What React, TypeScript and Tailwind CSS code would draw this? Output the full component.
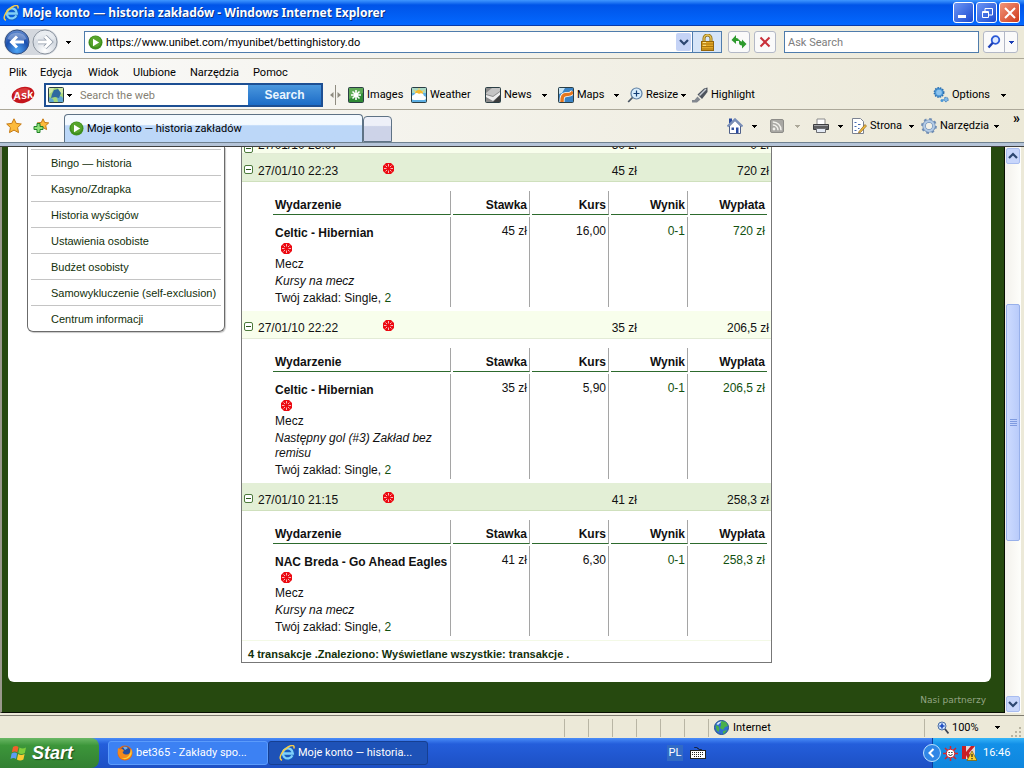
import type { ReactNode } from "react";
import { Fragment } from "react";

type Bet = {
  date: string;
  stake: string;
  payout: string;
  event?: string;
  market?: string;
  odds?: string;
};

const sidebarLinks = [
  "Bingo — historia",
  "Kasyno/Zdrapka",
  "Historia wyścigów",
  "Ustawienia osobiste",
  "Budżet osobisty",
  "Samowykluczenie (self-exclusion)",
  "Centrum informacji",
];

const bets: Bet[] = [
  { date: "27/01/10 23:07", stake: "50 zł", payout: "0 zł" },
  {
    date: "27/01/10 22:23",
    stake: "45 zł",
    payout: "720 zł",
    event: "Celtic - Hibernian",
    market: "Kursy na mecz",
    odds: "16,00",
  },
  {
    date: "27/01/10 22:22",
    stake: "35 zł",
    payout: "206,5 zł",
    event: "Celtic - Hibernian",
    market: "Następny gol (#3) Zakład bez remisu",
    odds: "5,90",
  },
  {
    date: "27/01/10 21:15",
    stake: "41 zł",
    payout: "258,3 zł",
    event: "NAC Breda - Go Ahead Eagles",
    market: "Kursy na mecz",
    odds: "6,30",
  },
];

const menuItems = [
  { label: "Plik", width: "w-[31px]" },
  { label: "Edycja", width: "w-12" },
  { label: "Widok", width: "w-[45px]" },
  { label: "Ulubione", width: "w-[57px]" },
  { label: "Narzędzia", width: "w-[63px]" },
  { label: "Pomoc", width: "w-12" },
];

/* Icons */

function Arrow({ className = "text-black" }: { className?: string }) {
  return (
    <svg className={`h-[3px] w-[5px] shrink-0 ${className}`} viewBox="0 0 5 3" shapeRendering="crispEdges">
      <path d="M0 0h5v1H4v1H3v1H2V2H1V1H0z" fill="currentColor" />
    </svg>
  );
}

function Chevron({ down = false }: { down?: boolean }) {
  return (
    <svg className="h-2.5 w-2.5" viewBox="0 0 10 10">
      <path d={down ? "M1 3l4 4 4-4" : "M1 7l4-4 4 4"} fill="none" stroke="#2c4670" strokeWidth="2.2" />
    </svg>
  );
}

function IeLogo({ size }: { size: string }) {
  return (
    <svg className={`shrink-0 ${size}`} viewBox="0 0 16 16">
      <path
        d="M13.4 10.6A5 5 0 1 1 13.8 8.500H5"
        fill="none"
        stroke="#1560bd"
        strokeWidth="3.800"
      />
      <path
        d="M13.4 10.4A5 5 0 1 1 13.8 8.500H5"
        fill="none"
        stroke="#7fd0fa"
        strokeWidth="2.300"
      />
      <path
        d="M3 15.200C-1.500 14 3 5.500 9 2 13-.3 16 0 14.800 3.600"
        fill="none"
        stroke="#f5cc4a"
        strokeWidth="1.500"
      />
    </svg>
  );
}

function PlayBadge() {
  return (
    <svg className="h-[15px] w-[15px] shrink-0" viewBox="0 0 15 15">
      <circle cx="7.500" cy="7.500" r="7" fill="#3f8f1c" />
      <circle cx="7.500" cy="6.500" r="5.500" fill="#57a42c" />
      <path d="M5 3.800l6.200 3.700L5 11.200z" fill="#fff" />
    </svg>
  );
}

function SportIcon() {
  return (
    <svg className="block h-[11px] w-[11px]" viewBox="0 0 11 11">
      <path d="M3 0h5l3 3v5l-3 3H3L0 8V3z" fill="#ec0a12" />
      <path
        d="M5.500 1v2.500M5.500 7.500v2.500M1 5.500h2.500M7.500 5.500h2.500M2.500 2.500l1.500 1.500M7 7l1.500 1.500M8.500 2.500L7 4M4 7L2.500 8.500"
        stroke="#fff"
        strokeWidth=".7"
      />
    </svg>
  );
}

function NavArrow({ forward = false }: { forward?: boolean }) {
  return (
    <svg className="h-[26px] w-[26px]" viewBox="0 0 26 26">
      <defs>
        <radialGradient id={forward ? "fwd" : "back"} cx=".5" cy=".85" r=".9">
          <stop offset="0" stopColor={forward ? "#ffffff" : "#4fa6f5"} />
          <stop offset=".55" stopColor={forward ? "#d3d9e1" : "#1b4fae"} />
          <stop offset="1" stopColor={forward ? "#f4f6f8" : "#6f95d4"} />
        </radialGradient>
      </defs>
      <circle cx="13" cy="13" r="12" fill={forward ? "url(#fwd)" : "url(#back)"} stroke={forward ? "#8b939e" : "#35507f"} />
      <path d="M3.500 10a10 9 0 0 1 19 0q-9 4-19 0z" fill="#fff" opacity=".3" />
      <path
        d={forward ? "M6 13h12M13 7.500l5.500 5.500-5.500 5.500" : "M20 13H8M13 7.500L7.500 13l5.500 5.500"}
        fill="none"
        stroke={forward ? "#8e98a6" : "none"}
        strokeWidth="4.500"
      />
      <path
        d={forward ? "M6 13h12M13 7.500l5.500 5.500-5.500 5.500" : "M20 13H8M13 7.500L7.500 13l5.500 5.500"}
        fill="none"
        stroke="#fff"
        strokeWidth="3"
      />
    </svg>
  );
}

function LockIcon() {
  return (
    <svg className="h-[17px] w-[15px]" viewBox="0 0 15 17">
      <path d="M4 8V4.500a3.500 3.500 0 0 1 7 0V8" fill="none" stroke="#8a6a14" strokeWidth="3" />
      <path d="M4 8V4.500a3.500 3.500 0 0 1 7 0V8" fill="none" stroke="#e6c455" strokeWidth="1.400" />
      <rect x="1.500" y="7.500" width="12" height="9" fill="#e3a826" stroke="#94650c" />
      <path d="M2 10h11M2 12.500h11M2 15h11" stroke="#a9740f" />
      <path d="M3 8.500h3M3 11.300h3" stroke="#ffe58c" />
    </svg>
  );
}

function RefreshIcon() {
  return (
    <svg className="h-4 w-4" viewBox="0 0 16 16">
      <path d="M5 1v3q3 0 3 3H5v3L.5 6z" fill="#2c9a2c" />
      <path d="M11 14.500v-3q-3 0-3-3V5.500q1.500 2.500 3 2v-2l4.500 4.500z" fill="#2c9a2c" />
    </svg>
  );
}

function StopIcon() {
  return (
    <svg className="h-3 w-3" viewBox="0 0 12 12">
      <path d="M1.500 1.500l9 9M10.500 1.500l-9 9" stroke="#c9303a" strokeWidth="2" />
    </svg>
  );
}

function MagnifierIcon() {
  return (
    <svg className="h-3.5 w-3.5" viewBox="0 0 14 14">
      <circle cx="8.500" cy="5" r="3.800" fill="#dfeaff" stroke="#2b59d6" strokeWidth="1.800" />
      <path d="M5.800 7.800L1.500 12.500" stroke="#1c3fb5" strokeWidth="2.400" />
    </svg>
  );
}

function AskLogo() {
  return (
    <svg className="h-5 w-6 shrink-0" viewBox="0 0 24 20">
      <ellipse cx="12" cy="10" rx="11.500" ry="8" fill="#c4151c" transform="rotate(-14 12 10)" />
      <ellipse cx="11" cy="7" rx="8" ry="3.500" fill="#e7504c" opacity=".6" transform="rotate(-14 11 7)" />
      <text
        x="12"
        y="14"
        fill="#fff"
        fontFamily="Liberation Sans, sans-serif"
        fontSize="11"
        fontStyle="italic"
        fontWeight="bold"
        textAnchor="middle"
        transform="rotate(-8 12 10)"
      >
        Ask
      </text>
    </svg>
  );
}

function Tile({ fill, children }: { fill: string; children: ReactNode }) {
  return (
    <svg className="h-4 w-4 shrink-0" viewBox="0 0 16 16">
      <rect x=".5" y=".5" width="15" height="15" rx="1" fill={fill} />
      {children}
      <rect x=".5" y=".5" width="15" height="15" rx="1" fill="none" stroke="#2b3e44" />
    </svg>
  );
}

function GlobeTile() {
  return (
    <Tile fill="#a6d67c">
      <path d="M1 1h5l-2 4-3 2zM10 1h5v5l-3 1z" fill="#cfe9a4" />
      <path d="M9 10l4-1 2 2v4h-5zM1 10l4 2 1 3H1z" fill="#5fa7d2" />
      <path d="M6 3l4-1 3 4-2 5-4-1-4 1 1-4z" fill="#2f699f" />
    </Tile>
  );
}

function ImagesIcon() {
  return (
    <Tile fill="#2f8a35">
      <path d="M1 1h14v5L1 12z" fill="#5eaa56" />
      <path d="M8 3v10M3 8h10M4.500 4.500l7 7M11.500 4.500l-7 7" stroke="#fff" strokeWidth="1.600" />
    </Tile>
  );
}

function WeatherIcon() {
  return (
    <Tile fill="#5caee2">
      <path d="M1 1h14v5H1z" fill="#a9d8c4" />
      <circle cx="8" cy="7" r="4" fill="#f5b92d" />
      <path d="M8 1v2M3 3l2 2M13 3l-2 2" stroke="#f7d25c" />
      <path d="M3 13a2.500 2.500 0 0 1 0-5 3 3 0 0 1 5-1 3 3 0 0 1 5 2 2 2 0 0 1 0 4z" fill="#fff" />
    </Tile>
  );
}

function NewsIcon() {
  return (
    <Tile fill="#8a8a8a">
      <path d="M1 6l6-5h8v3L8 9 1 7z" fill="#c4c4c4" />
      <path d="M1 8l7 2 7-5v3l-7 6-7-4z" fill="#ededed" />
      <path d="M8 15l7-7v7z" fill="#3e3e3e" />
    </Tile>
  );
}

function MapsIcon() {
  return (
    <Tile fill="#3b83c4">
      <path d="M1 1h6L4 6 1 7z" fill="#c7e3f2" />
      <path d="M4 15c0-6 1-7.500 5-7.500S13 7 15 5" fill="none" stroke="#fff" strokeWidth="5" />
      <path d="M4 15c0-6 1-7.500 5-7.500S13 7 15 5" fill="none" stroke="#e6771e" strokeWidth="3.400" />
    </Tile>
  );
}

function ResizeIcon() {
  return (
    <svg className="h-4 w-4 shrink-0" viewBox="0 0 16 16">
      <circle cx="9.500" cy="6.500" r="5.500" fill="#d7ecfb" stroke="#5d7fa3" strokeWidth="1.200" />
      <path d="M9.500 3.500v6M6.500 6.500h6" stroke="#123d75" strokeWidth="1.200" />
      <path d="M5.500 10.500L1.200 15" stroke="#4a5563" strokeWidth="1.800" />
    </svg>
  );
}

function HighlightIcon() {
  return (
    <svg className="h-4 w-4 shrink-0" viewBox="0 0 16 16">
      <path d="M5.500 7.500L12 1.500l3.500-1V5L10 12z" fill="#4e545e" />
      <path d="M7.500 8.500L14 2" stroke="#c8ced6" strokeWidth="1.500" />
      <path d="M0 15.500h5l3.500-3-3-3L2.500 13H0z" fill="#83888f" />
    </svg>
  );
}

function OptionsIcon() {
  return (
    <svg className="h-4 w-4 shrink-0" viewBox="0 0 16 16">
      <circle cx="6" cy="5.500" r="4.700" fill="#4b97d6" stroke="#2e6fae" strokeDasharray="1.500 1" strokeWidth="1.500" />
      <circle cx="6" cy="5.500" r="2.800" fill="#8ec4ee" />
      <circle cx="13" cy="12.500" r="2.200" fill="#7fb8e8" stroke="#2e6fae" strokeDasharray="1.500 1" />
      <circle cx="9" cy="13.500" r="1.500" fill="#4b97d6" />
    </svg>
  );
}

function StarIcon({ plus = false }: { plus?: boolean }) {
  return (
    <svg className="h-4 w-4" viewBox="0 0 16 16">
      <path
        d={
          plus
            ? "M10 .8l1.700 3.700 4 .4-3 2.700.9 4L10 9.500l-3.600 2.100.9-4-3-2.700 4-.4z"
            : "M8 .8l2.200 4.600 5.100.6-3.700 3.500.9 5.100L8 12.100l-4.500 2.500.9-5.100L.7 6l5.100-.6z"
        }
        fill="#fdbb3c"
        stroke="#c47812"
      />
      {plus && (
        <path d="M4 5.500h3v3h3v3H7v3H4v-3H1v-3h3z" fill="#8fe07a" stroke="#23832a" />
      )}
    </svg>
  );
}

function HomeIcon() {
  return (
    <svg className="h-4 w-4" viewBox="0 0 16 16">
      <path d="M2 .5h3v5H2z" fill="#2a4ba0" />
      <path d="M2.500 8v7.500h11V8L8 2.500z" fill="#fff" stroke="#50618a" />
      <path d="M.5 8.500L8 1.200l7.500 7.300" fill="none" stroke="#7a8fb8" strokeWidth="2" />
      <path d="M9 9.500h2.500v5.500H9z" fill="#2a4ba0" />
      <path d="M4.500 9.500h2.500v2.500H4.500z" fill="#35539c" />
    </svg>
  );
}

function FeedIcon() {
  return (
    <svg className="h-3.5 w-3.5" viewBox="0 0 14 14">
      <rect x=".5" y=".5" width="13" height="13" rx="1.500" fill="#a9a8a4" stroke="#8d8c88" />
      <circle cx="4" cy="10" r="1.400" fill="#f2f1ec" />
      <path d="M2.800 6a5 5 0 0 1 5.200 5.200M2.800 3a8 8 0 0 1 8.200 8.200" fill="none" stroke="#f2f1ec" strokeWidth="1.500" />
    </svg>
  );
}

function PrinterIcon() {
  return (
    <svg className="h-4 w-4" viewBox="0 0 16 16">
      <path d="M4 7V1h8v6" fill="#fff" stroke="#8a8a8a" />
      <path d="M.5 6.500h15v5H.5z" fill="#5c5d60" stroke="#3d3e41" />
      <path d="M1 7.500h14" stroke="#a3a4a8" />
      <path d="M3.500 10.500h9v4h-9z" fill="#e4ebf5" stroke="#6d6e72" />
    </svg>
  );
}

function PageIcon() {
  return (
    <svg className="h-4 w-4" viewBox="0 0 16 16">
      <path d="M1.500.5h8l3 3v12h-11z" fill="#fff" stroke="#7b8291" />
      <path d="M3.500 4.500h2m-2 4h2m-2 4h2M7 6.500h2.500M7 10.500h1.500" stroke="#4468b0" />
      <path d="M8 13.500l6-7 1.500 1.500-6 6.500-2 .5z" fill="#f0b93a" stroke="#8c6420" strokeWidth=".7" />
    </svg>
  );
}

function GearIcon() {
  return (
    <svg className="h-4 w-4" viewBox="0 0 16 16">
      <circle cx="8" cy="8" r="6.800" fill="none" stroke="#6f8db4" strokeDasharray="2.670 2.670" strokeWidth="2.200" />
      <circle cx="8" cy="8" r="4.800" fill="none" stroke="#6f8db4" strokeWidth="3.600" />
      <circle cx="8" cy="8" r="4.800" fill="none" stroke="#b3cbe6" strokeWidth="2.200" />
      <circle cx="8" cy="8" r="3" fill="#f2f1e8" />
    </svg>
  );
}

function GlobeIcon() {
  return (
    <svg className="h-[15px] w-[15px]" viewBox="0 0 15 15">
      <circle cx="7.500" cy="7.500" r="7" fill="#2f6fd0" stroke="#23508f" />
      <path d="M7 1l5 1 2 4-3 1-2 3-3-2 1-3zM1.500 5l3 1 1 3-1 3-2-2zM9 11l4-1-2 3-2 1z" fill="#49b04b" />
      <path d="M2.500 4q2-3 5-2.500L4 5z" fill="#d8ecff" />
    </svg>
  );
}

function WindowsFlag() {
  return (
    <svg className="h-[18px] w-[18px]" viewBox="0 0 18 18">
      <path d="M3 3q3-2 5.500 0L7.300 8.500q-2.500-2-5.500 0z" fill="#f0602c" />
      <path d="M9.500 3.500q3 2 6.500 0L14.800 9q-3.300 2-6.500 0z" fill="#7fce3c" />
      <path d="M1.600 9.500q3-2 5.500 0L6 15q-2.500-2-5.500 0z" fill="#5c9cf4" />
      <path d="M8.100 10q3 2 6.500 0l-1.200 5.500q-3.300 2-6.500 0z" fill="#fccb32" />
    </svg>
  );
}

function FirefoxIcon() {
  return (
    <svg className="h-4 w-4 shrink-0" viewBox="0 0 16 16">
      <circle cx="8" cy="8" r="7.500" fill="#e66a12" />
      <circle cx="8.500" cy="6.500" r="5" fill="#274f9e" />
      <path d="M6 2q3-1 5 1L8 5z" fill="#74b0ea" />
      <path d="M1 3l2 1.500q2-1 3 0L7 6 5.500 7q1 3 4 2.500 4 0 4.500-6 3 5-1 9-4 3.500-9 1Q0 10 1 3z" fill="#f58a1c" />
      <path d="M14 4q2 5-2 8.500-4 3-8 .500 5 1 7.500-2T14 4z" fill="#fbd23c" />
    </svg>
  );
}

function ToolButton({ width, icon, label, arrow = false }: { width: string; icon: ReactNode; label: string; arrow?: boolean }) {
  return (
    <button className={`flex shrink-0 items-center gap-[3px] ${width}`}>
      {icon}
      <span>{label}</span>
      {arrow && (
        <span className="ml-auto">
          <Arrow />
        </span>
      )}
    </button>
  );
}

/* Browser chrome */

function TitleBar() {
  return (
    <header className="flex h-[26px] shrink-0 items-center border-b border-[#0a3ba8] bg-linear-to-b from-[#3f97ff] via-[#0054e8] via-20% to-[#0468ff] pr-1 pl-[3px]">
      <IeLogo size="h-4 w-4" />
      <h1 className="ml-[3px] flex-1 truncate font-['Noto_Sans',sans-serif] text-xs font-bold text-white [text-shadow:1px_1px_#0a2f80]">
        Moje konto — historia zakładów - Windows Internet Explorer
      </h1>
      <div className="flex gap-0.5">
        <button aria-label="Minimalizuj" className="flex h-[21px] w-[21px] items-end rounded-[3px] border border-white bg-linear-to-br from-[#6d95f5] to-[#1c48cf] p-1">
          <span className="h-[3px] w-2 bg-white" />
        </button>
        <button aria-label="Przywróć" className="flex h-[21px] w-[21px] items-center justify-center rounded-[3px] border border-white bg-linear-to-br from-[#6d95f5] to-[#1c48cf]">
          <svg className="h-3 w-3" viewBox="0 0 12 12">
            <path d="M4 4V1.500h7.500V8H8" fill="none" stroke="#fff" />
            <path d="M1.500 4.500h6v6h-6zM1 5.500h7" fill="none" stroke="#fff" />
          </svg>
        </button>
        <button aria-label="Zamknij" className="flex h-[21px] w-[21px] items-center justify-center rounded-[3px] border border-white bg-linear-to-br from-[#f0957a] to-[#cf3510]">
          <svg className="h-3 w-3" viewBox="0 0 12 12">
            <path d="M1 1l10 10M11 1L1 11" stroke="#fff" strokeWidth="2" />
          </svg>
        </button>
      </div>
    </header>
  );
}

function AddressBar() {
  return (
    <div className="flex h-[33px] shrink-0 items-center border-b border-[#aca899] bg-linear-to-r from-[#fafafa] to-[#ece9d8] pr-1.5 pl-1">
      <div className="flex gap-0.5 rounded-full bg-[#d4d8de]">
        <button aria-label="Wstecz">
          <NavArrow />
        </button>
        <button aria-label="Dalej">
          <NavArrow forward />
        </button>
      </div>
      <button aria-label="Ostatnie strony" className="ml-1.5 flex w-2 justify-center">
        <Arrow />
      </button>
      <div className="ml-3 flex h-[22px] flex-1 items-center border border-[#4f7cac] bg-white pl-[3px]">
        <PlayBadge />
        <input aria-label="Adres" defaultValue="https://www.unibet.com/myunibet/bettinghistory.do" className="ml-[3px] min-w-0 flex-1 pt-px outline-none" />
        <button aria-label="Pokaż listę adresów" className="flex h-[18px] w-[15px] items-center justify-center rounded-xs bg-[#c5d3f6]">
          <Chevron down />
        </button>
        <span className="ml-px flex h-5 w-[29px] items-center justify-center border-l border-[#4f7cac] bg-[#d6e5f8]">
          <LockIcon />
        </span>
      </div>
      <button aria-label="Odśwież" className="ml-1.5 flex h-[22px] w-[22px] items-center justify-center rounded-[3px] border border-[#b3b8c6] bg-[#fafafa]">
        <RefreshIcon />
      </button>
      <button aria-label="Zatrzymaj" className="ml-1 flex h-[22px] w-[22px] items-center justify-center rounded-[3px] border border-[#b3b8c6] bg-[#fafafa]">
        <StopIcon />
      </button>
      <input aria-label="Ask Search" placeholder="Ask Search" className="ml-2 h-[22px] w-[195px] border border-[#4f7cac] bg-white px-[3px] pt-px outline-none placeholder:text-[#7d7d7d]" />
      <div className="ml-1 flex h-[22px] rounded-[3px] border border-[#b3b8c6] bg-[#fafafa]">
        <button aria-label="Szukaj" className="flex w-5 items-center justify-center">
          <MagnifierIcon />
        </button>
        <button aria-label="Opcje wyszukiwania" className="flex w-[13px] items-center justify-center border-l border-[#b3b8c6]">
          <Arrow className="text-[#1c3fb5]" />
        </button>
      </div>
    </div>
  );
}

function MenuAndAskBar() {
  return (
    <div className="shrink-0 border-b border-[#aca899] bg-linear-to-r from-[#fafafa] to-[#ece9d8] pb-px">
      <nav className="flex h-[23px] items-center pt-1 pl-[9px]">
        {menuItems.map((item) => (
          <button key={item.label} className={`text-left ${item.width}`}>
            {item.label}
          </button>
        ))}
      </nav>
      <div className="flex h-[26px] items-center pr-[18px] pl-[11px]">
        <AskLogo />
        <div className="ml-[9px] flex h-6 w-[279px] shrink-0 border-2 border-[#1d4f93] bg-white">
          <button aria-label="Wybierz wyszukiwarkę" className="flex items-center gap-[3px] pl-0.5">
            <GlobeTile />
            <Arrow />
          </button>
          <input aria-label="Search the web" placeholder="Search the web" className="ml-2 min-w-0 flex-1 pt-px outline-none placeholder:text-[#857f73]" />
          <button className="w-[73px] bg-linear-to-b from-[#4a97dd] to-[#1b6cc7] font-['Liberation_Sans',sans-serif] text-xs font-bold text-[#eaf5ff]">
            Search
          </button>
        </div>
        <svg className="mx-[7px] h-5 w-[11px] shrink-0" viewBox="0 0 11 20">
          <path d="M5.500 0v20" stroke="#8f8c80" />
          <path d="M3.500 7v6L0 10zM7.500 7v6L11 10z" fill="#8f8c80" />
        </svg>
        <ToolButton width="w-[63px]" icon={<ImagesIcon />} label="Images" />
        <ToolButton width="w-[74px]" icon={<WeatherIcon />} label="Weather" />
        <ToolButton width="w-[62px]" icon={<NewsIcon />} label="News" arrow />
        <span className="w-[11px]" />
        <ToolButton width="w-[61px]" icon={<MapsIcon />} label="Maps" arrow />
        <span className="w-2" />
        <ToolButton width="w-[59px]" icon={<ResizeIcon />} label="Resize" arrow />
        <span className="w-1.5" />
        <ToolButton width="w-[63px]" icon={<HighlightIcon />} label="Highlight" />
        <span className="flex-1" />
        <ToolButton width="w-[73px]" icon={<OptionsIcon />} label="Options" arrow />
      </div>
    </div>
  );
}

function TabBar() {
  return (
    <div className="shrink-0 border-b border-[#3f3f3f]">
      <div className="flex h-[33px] items-center border-b border-[#6f8190] bg-linear-to-r from-[#fafafa] to-[#ece9d8] pr-1 pl-1.5">
        <button aria-label="Centrum ulubionych">
          <StarIcon />
        </button>
        <button aria-label="Dodaj do ulubionych" className="ml-[11px]">
          <StarIcon plus />
        </button>
        <div className="flex self-end">
          <button className="ml-[15px] flex h-7 w-[299px] items-center gap-[3px] rounded-t border border-b-0 border-[#5e7285] bg-linear-to-b from-[#f4faff] from-35% to-[#bcd7f8] to-40% pl-1">
            <PlayBadge />
            Moje konto — historia zakładów
          </button>
          <button aria-label="Nowa karta" className="h-[26px] w-[29px] self-end rounded-t border border-[#5e7285] bg-linear-to-b from-[#eef0f8] from-35% to-[#cdd3e8] to-40%" />
        </div>
        <span className="flex-1" />
        <div className="flex shrink-0 items-center">
          <ToolButton width="w-[30px]" icon={<HomeIcon />} label="" arrow />
          <span className="w-[13px]" />
          <button aria-label="Kanały informacyjne" className="flex w-[30px] items-center justify-between">
            <FeedIcon />
            <Arrow className="text-[#aca899]" />
          </button>
          <span className="w-[13px]" />
          <ToolButton width="w-[30px]" icon={<PrinterIcon />} label="" arrow />
          <span className="w-2" />
          <ToolButton width="w-[63px]" icon={<PageIcon />} label="Strona" arrow />
          <span className="w-[7px]" />
          <ToolButton width="w-[78px]" icon={<GearIcon />} label="Narzędzia" arrow />
        </div>
        <button aria-label="Więcej" className="ml-3.5 self-start pt-0.5 text-sm leading-3 font-bold">
          »
        </button>
      </div>
      <div className="h-[3px] bg-[#b5c4d8]" />
    </div>
  );
}

/* Page content */

function Sidebar() {
  return (
    <nav className="ml-[19px] w-[198px] shrink-0 self-start rounded-b-md border border-t-0 border-[#6b6b6b] px-[3px] pt-0.5 shadow-[1px_1px_1px_#c8c8c8]">
      <ul>
        {sidebarLinks.map((link) => (
          <li key={link} className="h-[26px] border-t border-[#c4c4c4] pl-5 text-[11px] leading-[26px] whitespace-nowrap">
            <a href="#" className="text-[#12300a]">
              {link}
            </a>
          </li>
        ))}
      </ul>
    </nav>
  );
}

function BetDetails({ bet }: { bet: Bet }) {
  const head = "h-6 border-b border-b-[#2d6a2d] px-0.5 pt-1.5 font-bold";
  const cell = "px-0.5 py-[7px] align-top";
  const divider = "border-r border-r-[#a5a5a5]";

  return (
    <table className="w-full table-fixed border-separate border-spacing-[2px] text-right leading-[15px]">
      <thead>
        <tr>
          <th className={`w-[178px] text-left ${head} ${divider}`}>Wydarzenie</th>
          <th className={`${head} ${divider}`}>Stawka</th>
          <th className={`${head} ${divider}`}>Kurs</th>
          <th className={`${head} ${divider}`}>Wynik</th>
          <th className={head}>Wypłata</th>
        </tr>
      </thead>
      <tbody>
        <tr>
          <td className={`px-0.5 pt-[9px] pb-px text-left ${divider}`}>
            <div className="flex flex-col gap-0.5">
              <b>{bet.event}</b>
              <span className="h-3 pl-1.5">
                <SportIcon />
              </span>
              <span>Mecz</span>
              <i>{bet.market}</i>
              <span>
                Twój zakład: Single, <a href="#" className="text-[#12500f]">2</a>
              </span>
            </div>
          </td>
          <td className={`${cell} ${divider}`}>{bet.stake}</td>
          <td className={`${cell} ${divider}`}>{bet.odds}</td>
          <td className={`${cell} ${divider} text-[#12500f]`}>0-1</td>
          <td className={`${cell} text-[#12500f]`}>{bet.payout}</td>
        </tr>
      </tbody>
    </table>
  );
}

function BettingHistory() {
  return (
    <section className="-mt-[22px] ml-4 w-[531px] shrink-0 self-start border border-[#777] text-xs text-[#111]">
      <table className="w-full table-fixed border-separate border-spacing-0">
        <colgroup>
          <col className="w-4" />
          <col className="w-[125px]" />
          <col />
          <col className="w-[100px]" />
          <col className="w-[134px]" />
        </colgroup>
        <tbody>
          {bets.map((bet, index) => (
            <Fragment key={bet.date}>
              <tr
                className={
                  index % 2
                    ? "h-7 bg-[#e3efd6] [&>td]:border-b [&>td]:border-[#cfe0bd]"
                    : "h-7 bg-[#f8feec] first:align-bottom [&>td]:border-b [&>td]:border-[#e3ebd6] first:[&>td]:align-bottom"
                }
              >
                <td className="pt-1 pl-0.5">
                  <button aria-label="Zwiń" className="flex h-[9px] w-[9px] items-center justify-center rounded-xs border border-[#4d7a3c] bg-white">
                    <span className="h-px w-[5px] bg-[#2d5a1e]" />
                  </button>
                </td>
                <td className="pt-1.5">{bet.date}</td>
                <td className="pt-0.5">{bet.event && <SportIcon />}</td>
                <td className="pt-1.5 text-right">{bet.stake}</td>
                <td className="pt-1.5 pr-0.5 text-right">{bet.payout}</td>
              </tr>
              {bet.event && (
                <tr>
                  <td colSpan={5} className="pt-[7px] pr-0.5 pb-0.5 pl-[29px]">
                    <BetDetails bet={bet} />
                  </td>
                </tr>
              )}
            </Fragment>
          ))}
        </tbody>
      </table>
      <p className="h-[22px] border-t border-[#f3f9e6] pl-1.5 text-[11px] leading-[26px] font-bold text-[#12300a]">
        4 transakcje .Znaleziono: Wyświetlane wszystkie: transakcje .
      </p>
    </section>
  );
}

function Scrollbar() {
  return (
    <div className="flex w-[17px] shrink-0 flex-col border-r border-[#ece9d8] bg-linear-to-r from-[#f3f1ec] to-[#fefefb]">
      <button aria-label="W górę" className="mx-px mt-px flex h-4 items-center justify-center rounded-xs border border-[#a9bdf0] bg-[#c8d6fb]">
        <Chevron />
      </button>
      <div className="flex-[141]" />
      <div className="mx-px flex flex-[235] flex-col items-center justify-center gap-px rounded-xs border border-[#98b0ea] bg-linear-to-r from-[#cddbff] to-[#b9cbfa]">
        <span className="h-px w-[7px] bg-[#7f9be0]" />
        <span className="h-px w-[7px] bg-[#7f9be0]" />
        <span className="h-px w-[7px] bg-[#7f9be0]" />
        <span className="h-px w-[7px] bg-[#7f9be0]" />
      </div>
      <div className="flex-[156]" />
      <button aria-label="W dół" className="mx-px mb-px flex h-4 items-center justify-center rounded-xs border border-[#a9bdf0] bg-[#c8d6fb]">
        <Chevron down />
      </button>
    </div>
  );
}

function PageView() {
  return (
    <div className="flex min-h-0 flex-1 border-b border-[#7d7b70] bg-[#ece9d8] pr-0.5 pb-0.5">
      <div className="flex min-w-0 flex-1 flex-col overflow-hidden border-x border-b border-l-2 border-black/80 border-l-[#9a988c] bg-[#26490f] pr-[13px] pl-1.5 font-['Liberation_Sans',sans-serif]">
        <main className="flex shrink-0 rounded-b-md bg-white pb-[19px]">
          <Sidebar />
          <BettingHistory />
        </main>
        <footer className="mt-2.5 pr-[5px] text-right font-['DejaVu_Sans',sans-serif] text-[9px] text-[#94a584]">
          <a href="#">Nasi partnerzy</a>
        </footer>
      </div>
      <Scrollbar />
    </div>
  );
}

/* Desktop chrome */

function StatusBar() {
  return (
    <div className="flex h-[22px] shrink-0 items-center justify-end bg-[#ece9d8] pt-px pr-0.5">
      {[...Array(6)].map((_, i) => (
        <span key={i} className="h-[18px] w-6 border-l border-[#b8b5a4]" />
      ))}
      <span className="flex h-[18px] w-[216px] items-center gap-1 border-l border-[#b8b5a4] pl-[5px]">
        <GlobeIcon />
        Internet
      </span>
      <button className="flex h-[18px] w-[76px] items-center gap-[3px] border-l border-[#b8b5a4] pl-3">
        <svg className="h-3.5 w-3" viewBox="0 0 12 14">
          <circle cx="5" cy="5" r="4" fill="#cfe3fb" stroke="#4b6ea3" />
          <path d="M5 2.500v5M2.500 5h5" stroke="#1b49c0" strokeWidth="1.600" />
          <path d="M8 8l3.500 4.500" stroke="#3c4452" strokeWidth="1.800" />
        </svg>
        <span>100%</span>
        <span className="ml-auto">
          <Arrow />
        </span>
      </button>
      <svg className="ml-2.5 h-3 w-3 self-end" viewBox="0 0 12 12">
        <path d="M9 1h2v2H9zM5 5h2v2H5zM9 5h2v2H9zM1 9h2v2H1zM5 9h2v2H5zM9 9h2v2H9z" fill="#b8b4a2" />
      </svg>
    </div>
  );
}

function Taskbar() {
  return (
    <footer className="flex h-[30px] shrink-0 items-center bg-linear-to-b from-[#4a8cf8] via-[#245edb] via-20% to-[#1d50c4] text-white">
      <button className="flex h-full w-[99px] items-center gap-1 rounded-r-lg bg-linear-to-b from-[#6ab865] via-[#3c963a] via-25% to-[#338033] pl-2.5 font-['Liberation_Sans',sans-serif] text-lg font-bold italic [text-shadow:1px_1px_1px_#1c4a1c]">
        <WindowsFlag />
        Start
      </button>
      <button className="ml-[9px] flex h-6 w-40 items-center gap-[3px] rounded-[3px] border border-[#5b9bfb] bg-[#3c81f3] pl-2">
        <FirefoxIcon />
        bet365 - Zakłady spo...
      </button>
      <button className="flex h-6 w-40 items-center gap-[3px] rounded-[3px] border border-[#163f91] bg-[#1e52b7] pl-2.5">
        <IeLogo size="h-4 w-4" />
        Moje konto — historia...
      </button>
      <span className="flex-1" />
      <span className="flex h-4 w-4 items-center justify-center bg-[#316ac5]">PL</span>
      <svg className="mr-[226px] ml-[7px] h-3 w-4" viewBox="0 0 16 12">
        <path d="M4 0q3 0 4 1.500T12 3" fill="none" stroke="#111" />
        <rect x=".5" y="3.500" width="15" height="8" fill="#fff" stroke="#222" />
        <path d="M2 5.500h12M2 7.500h12M4 9.500h8" stroke="#222" strokeDasharray="1 1" />
      </svg>
      <div className="flex h-full w-[92px] shrink-0 items-center border-l border-[#0b3d9c] bg-linear-to-b from-[#35b5f8] via-[#1290e8] via-20% to-[#0f86dd]">
        <button aria-label="Pokaż ukryte ikony" className="-ml-2.5 flex h-[18px] w-[18px] shrink-0 items-center justify-center rounded-full border border-[#bfe2fc] bg-[#2f86e6]">
          <svg className="h-2.5 w-2.5" viewBox="0 0 10 10">
            <path d="M6.500 1L2.500 5l4 4" fill="none" stroke="#fff" strokeWidth="2" />
          </svg>
        </button>
        <svg className="ml-0.5 h-[15px] w-[15px]" viewBox="0 0 15 15">
          <path d="M7.500 0v15M0 7.500h15M2 2l11 11M13 2L2 13" stroke="#d5242b" strokeWidth="1.500" />
          <circle cx="7.500" cy="7.500" r="4.200" fill="#fff" stroke="#d5242b" />
          <path d="M5.500 6.500h1.300M8.200 6.500h1.300M5.500 8.500q2 2 4 0" fill="none" stroke="#222" />
        </svg>
        <svg className="ml-[3px] h-4 w-4" viewBox="0 0 16 16">
          <path d="M1 1h13v13H1z" fill="#e8d5d5" />
          <path d="M1 1h4v6l5-6h4L8 8l3 6H7L5 10v4H1z" fill="#c81e25" />
          <path d="M11 6l5 9.500H6z" fill="#fbd233" stroke="#7a5b00" strokeWidth=".7" />
          <path d="M11 9v3M11 13v1.200" stroke="#222" strokeWidth="1.200" />
        </svg>
        <time className="ml-1.5">16:46</time>
      </div>
    </footer>
  );
}

export default function App() {
  return (
    <div className="flex h-screen min-h-[600px] flex-col overflow-hidden bg-[#ece9d8] font-['Roboto',sans-serif] text-[11px] leading-4 text-black">
      <TitleBar />
      <AddressBar />
      <MenuAndAskBar />
      <TabBar />
      <PageView />
      <StatusBar />
      <Taskbar />
    </div>
  );
}
